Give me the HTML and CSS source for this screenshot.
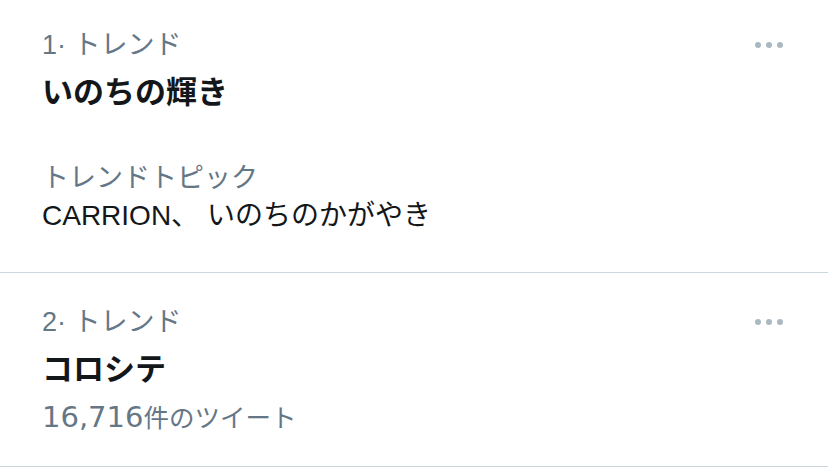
FILE: index.html
```html
<!DOCTYPE html>
<html lang="ja">
<head>
<meta charset="utf-8">
<link rel="stylesheet" href="styles.css">
</head>
<body>
<div class="list">
  <div class="item">
    <div class="meta">
      <span class="meta-text">1· トレンド</span>
      <svg class="more" width="28" height="6" viewBox="0 0 28 6"><circle cx="3" cy="3" r="3"/><circle cx="14" cy="3" r="3"/><circle cx="25" cy="3" r="3"/></svg>
    </div>
    <div class="title">いのちの輝き</div>
    <div class="topic">
      <div class="topic-label">トレンドトピック</div>
      <div class="topic-text">CARRION、 いのちのかがやき</div>
    </div>
  </div>
  <div class="item">
    <div class="meta">
      <span class="meta-text">2· トレンド</span>
      <svg class="more" width="28" height="6" viewBox="0 0 28 6"><circle cx="3" cy="3" r="3"/><circle cx="14" cy="3" r="3"/><circle cx="25" cy="3" r="3"/></svg>
    </div>
    <div class="title">コロシテ</div>
    <div class="count"><span class="count-num">16,716</span>件のツイート</div>
  </div>
</div>
</body>
</html>
```
FILE: styles.css
```css
html, body {
  margin: 0;
  padding: 0;
  background: #ffffff;
}
body {
  font-family: "Liberation Sans", "Noto Sans CJK JP", sans-serif;
  color: #14171a;
  overflow: hidden;
}
.list {
  margin-top: -4px;
}
.item {
  padding: 29px 45px 26px 42px;
  border-bottom: 1px solid #ccd6dd;
}
.meta {
  display: flex;
  justify-content: space-between;
  align-items: center;
  height: 40px;
}
.meta-text {
  font-size: 27px;
  line-height: 40px;
  color: #657786;
}
.more {
  fill: #aab8c2;
  display: block;
}
.title {
  margin-top: 3px;
  font-size: 31px;
  font-weight: bold;
  line-height: 50px;
}
.topic {
  margin-top: 42px;
  padding-bottom: 10px;
}
.topic-label {
  font-size: 27px;
  line-height: 36px;
  color: #657786;
}
.topic-text {
  font-size: 28px;
  line-height: 40px;
}
.count {
  font-size: 25.5px;
  line-height: 44px;
  color: #657786;
}
.count-num {
  font-family: "DejaVu Sans", sans-serif;
  font-size: 29px;
}
```
